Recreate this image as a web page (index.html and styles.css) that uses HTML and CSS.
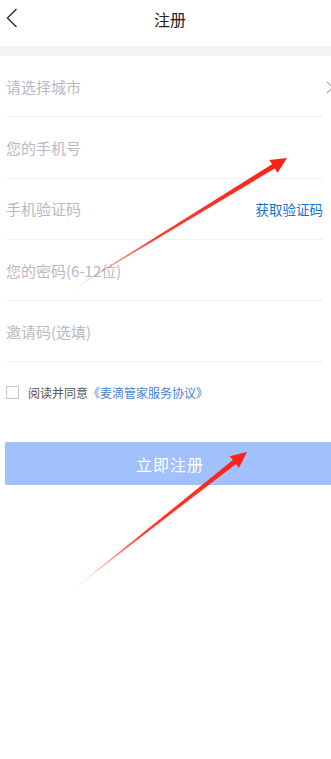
FILE: index.html
```html
<!DOCTYPE html>
<html lang="zh">
<head>
<meta charset="utf-8">
<link rel="stylesheet" href="styles.css">
</head>
<body>
<div class="page">
  <header class="topbar">
    <svg class="back" width="12" height="20" viewBox="0 0 12 20"><path d="M10.5 1 L1.5 10 L10.5 19" fill="none" stroke="#333" stroke-width="1.5"/></svg>
    <h1 class="title">注册</h1>
  </header>
  <div class="band"></div>
  <div class="form">
    <div class="row"><span class="ph">请选择城市</span><svg class="more" width="8" height="13" viewBox="0 0 8 13"><path d="M1 1 L6.5 6.5 L1 12" fill="none" stroke="#aaa" stroke-width="1.2"/></svg></div>
    <div class="row"><span class="ph">您的手机号</span></div>
    <div class="row"><span class="ph">手机验证码</span><span class="code">获取验证码</span></div>
    <div class="row"><span class="ph">您的密码(6-12位)</span></div>
    <div class="row"><span class="ph">邀请码(选填)</span></div>
  </div>
  <div class="agree"><span class="box"></span><span class="agree-text">阅读并同意</span><span class="link">《麦滴管家服务协议》</span></div>
  <div class="btn">立即注册</div>
</div>
<svg class="arrows" width="331" height="759" viewBox="0 0 331 759">
  <defs>
    <linearGradient id="g1" gradientUnits="userSpaceOnUse" x1="63" y1="295" x2="287" y2="158">
      <stop offset="0" stop-color="#ff2a1a" stop-opacity="0.05"/>
      <stop offset="0.4" stop-color="#ff2a1a" stop-opacity="0.9"/>
      <stop offset="1" stop-color="#ff2014"/>
    </linearGradient>
    <linearGradient id="g2" gradientUnits="userSpaceOnUse" x1="71" y1="591" x2="247" y2="452">
      <stop offset="0" stop-color="#ff2a1a" stop-opacity="0.05"/>
      <stop offset="0.4" stop-color="#ff2a1a" stop-opacity="0.9"/>
      <stop offset="1" stop-color="#ff2014"/>
    </linearGradient>
  </defs>
  <polygon fill="url(#g1)" points="63,295 274.65,168.48 277.5,172.8 287,158 269.3,160 272.05,164.22"/>
  <polygon fill="url(#g2)" points="71,591 235.99,463.88 238.9,468 247,452 229.6,456.2 232.89,459.96"/>
</svg>
</body>
</html>
```
FILE: styles.css
```css
html, body {
  margin: 0;
  padding: 0;
  background: #fff;
  overflow: hidden;
}
body {
  font-family: "Noto Sans CJK SC", "Noto Sans", sans-serif;
  position: relative;
  width: 331px;
  height: 759px;
}
.page {
  width: 340px;
}
.topbar {
  height: 46px;
  position: relative;
  display: flex;
  align-items: center;
  justify-content: center;
}
.back {
  position: absolute;
  left: 6px;
  top: 8px;
}
.title {
  margin: 0;
  font-size: 16px;
  font-weight: 400;
  color: #222;
  line-height: 1;
  margin-top: -9px;
}
.band {
  height: 10px;
  background: #f4f4f8;
}
.form {
  padding-left: 6px;
  width: 317px;
}
.row {
  height: 60.3px;
  border-bottom: 1px solid #efeff1;
  display: flex;
  align-items: center;
  justify-content: space-between;
  position: relative;
}
.ph {
  font-size: 15px;
  color: #b9b9c1;
}
.more {
  position: absolute;
  left: 320px;
  top: 25px;
}
.code {
  font-size: 13.5px;
  color: #1b6fc6;
}
.agree {
  display: flex;
  align-items: center;
  padding-left: 6px;
  height: 61px;
  font-size: 12px;
}
.box {
  width: 11px;
  height: 11px;
  border: 1px solid #c8c8c8;
  margin-right: 9px;
  background: #fff;
}
.agree-text {
  color: #555;
}
.link {
  color: #4a7fd2;
}
.btn {
  margin: 19px 5px 0 5px;
  height: 43px;
  background: #a2c0fb;
  border-radius: 2px;
  color: #fff;
  font-size: 16px;
  display: flex;
  align-items: center;
  justify-content: center;
  letter-spacing: 1px;
}
.arrows {
  position: absolute;
  left: 0;
  top: 0;
  pointer-events: none;
}
```
